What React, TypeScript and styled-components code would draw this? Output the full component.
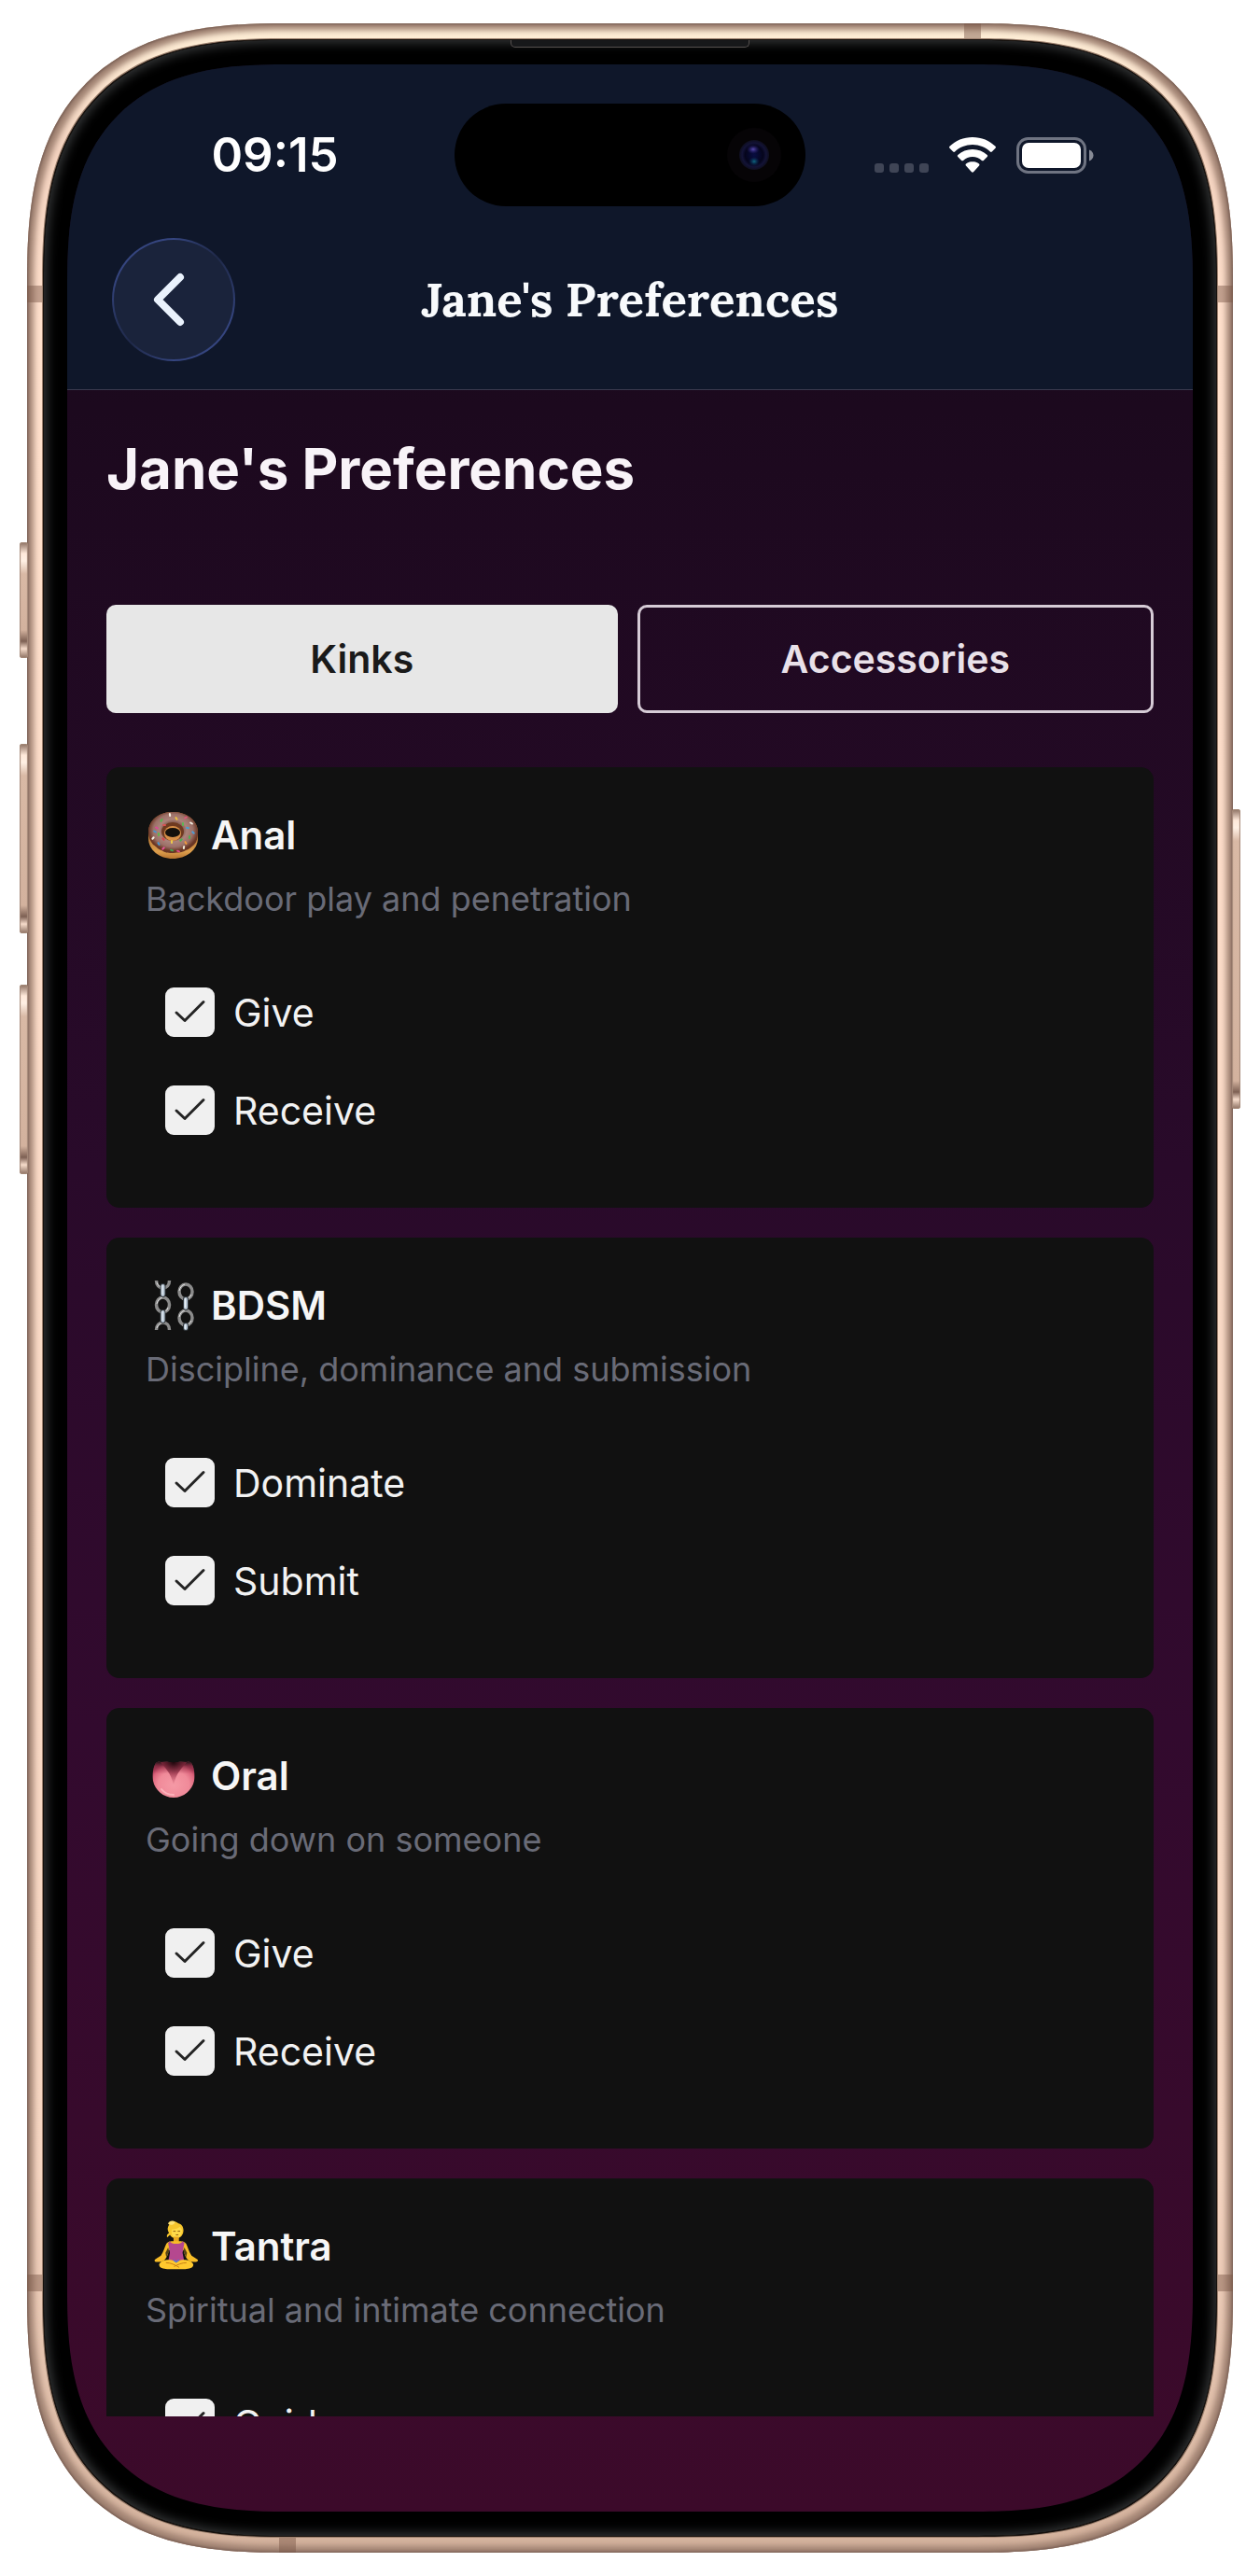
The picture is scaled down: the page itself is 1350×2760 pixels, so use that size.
import React, { useState } from "react";
import styled, { createGlobalStyle, css } from "styled-components";

const GlobalStyle = createGlobalStyle`
  *, *::before, *::after { box-sizing: border-box; }
  body { margin: 0; background: #fff; font-family: Inter, "Liberation Sans", sans-serif; }
  h1, h2, h3, p { margin: 0; }
  button { font: inherit; cursor: pointer; }
`;

const Page = styled.div`
  height: 100vh;
  padding: 25px 29px;
`;

/* Corners use a continuous curve where the browser knows it. */
const smoothCorner = (round: number, smooth: number) => css`
  border-radius: ${round}px;
  @supports (corner-shape: squircle) {
    border-radius: ${smooth}px;
    corner-shape: superellipse(1.4);
  }
`;

const Device = styled.div`
  position: relative;
  height: 100%;
  padding: 17px;
  background: linear-gradient(#fff0d8, #f4d3c0 5%, #ffe0cc 12%, #f6d6c2 85%, #d3b19c);
  box-shadow: inset 0 0 3px 1px #735a50, inset 0 0 6px 7px #a08272;
  ${smoothCorner(220, 276)}
`;

const Bezel = styled.div`
  position: relative;
  height: 100%;
  padding: 26px 25px;
  background: #000;
  border: 1px solid #17110d;
  box-shadow: 0 0 0 1px #9b7f6d, inset 0 0 12px 3px #343637;
  ${smoothCorner(204, 258)}
`;

const Screen = styled.div`
  position: relative;
  display: flex;
  flex-direction: column;
  height: 100%;
  overflow: hidden;
  background: linear-gradient(#150919, #1c091e 14%, #290a2a 45%, #320a2e 68%, #3c0a2a);
  ${smoothCorner(186, 236)}
`;

const SideButton = styled.span<{ $side: "left" | "right"; $top: number; $length: number }>`
  position: absolute;
  ${(p) => p.$side}: -8px;
  top: ${(p) => p.$top}px;
  width: 9px;
  height: ${(p) => p.$length}px;
  border-radius: 3px;
  background: linear-gradient(
    #8a6e60 0, #ffe9da 12px, #fff0e4 20px, #d9b9a5 34px,
    #d3b29e calc(100% - 30px), #7d6053 calc(100% - 18px), #f6dccb calc(100% - 10px), #8a6e60 100%
  );
  box-shadow: inset 0 0 1px 1px #a58978;
`;

const Band = styled.span<{ $edge: "left" | "right" | "top" | "bottom"; $near: "left" | "right" | "top" | "bottom"; $at: number }>`
  position: absolute;
  ${(p) => p.$edge}: 0;
  ${(p) => p.$near}: ${(p) => p.$at}px;
  width: ${(p) => (p.$edge === "left" || p.$edge === "right" ? 16 : 18)}px;
  height: ${(p) => (p.$edge === "left" || p.$edge === "right" ? 18 : 16)}px;
  background: rgba(120, 84, 68, 0.45);
`;

const Speaker = styled.span`
  position: absolute;
  top: 0;
  left: calc(50% - 128px);
  width: 256px;
  height: 8px;
  border: 1px solid #55504e;
  border-top: 0;
  border-radius: 0 0 5px 5px;
  background: #17181a;
`;

const Header = styled.header`
  flex: none;
  background: #0f172a;
  border-bottom: 1px solid #3b3a4e;
`;

const StatusBar = styled.div`
  display: grid;
  grid-template-columns: 1fr 376px 1fr;
  align-items: center;
  justify-items: center;
  height: 186px;
  padding-top: 8px;
`;

const Clock = styled.time`
  padding-left: 30px;
  color: #fff;
  font-size: 51px;
  line-height: 60px;
  font-weight: 600;
`;

const Island = styled.div`
  display: flex;
  align-items: center;
  justify-content: flex-end;
  width: 100%;
  height: 110px;
  padding-right: 25px;
  border-radius: 55px;
  background: #000;
`;

const StatusIcons = styled.div`
  display: flex;
  align-items: center;
  gap: 22px;
  padding-right: 32px;
`;

const NavBar = styled.div`
  display: grid;
  grid-template-columns: 132px 1fr 132px;
  align-items: center;
  padding: 0 48px 30px;
`;

const BackButton = styled.button`
  display: grid;
  place-items: center;
  width: 132px;
  height: 132px;
  padding: 0 10px 0 0;
  border: 2px solid transparent;
  border-radius: 50%;
  background:
    linear-gradient(#1a233b, #1a233b) padding-box,
    conic-gradient(#35457f, #1f2949 45deg, #35457f 110deg, #35457f 180deg, #1f2949 225deg, #35457f 290deg, #35457f) border-box;
`;

const NavTitle = styled.h2`
  color: #f8fafc;
  font-family: Lora, "Liberation Serif", serif;
  font-size: 51px;
  line-height: 66px;
  font-weight: 700;
  text-align: center;
  white-space: nowrap;
`;

const Content = styled.main`
  flex: 1;
  min-height: 0;
  margin-bottom: 102px;
  padding: 48px 42px 0;
  overflow-y: auto;
  scrollbar-width: none;
`;

const Heading = styled.h1`
  margin-bottom: 110px;
  color: #f8f3f8;
  font-size: 60px;
  line-height: 72px;
  font-weight: 700;
`;

const Tabs = styled.div`
  display: flex;
  gap: 21px;
  margin-bottom: 58px;
`;

const Tab = styled.button<{ $active: boolean }>`
  flex: 1;
  height: 116px;
  padding: 0;
  border: ${(p) => (p.$active ? "0" : "3px solid #d6cbd6")};
  border-radius: 10px;
  background: ${(p) => (p.$active ? "#e7e7e7" : "transparent")};
  color: ${(p) => (p.$active ? "#1a1a1a" : "#e9e1e9")};
  font-size: 41px;
  line-height: 60px;
  font-weight: 600;
`;

const CardList = styled.div`
  display: flex;
  flex-direction: column;
  gap: 32px;
`;

const Card = styled.section`
  padding: 43px 42px 52px;
  border-radius: 14px;
  background: #111;
`;

const CardTitle = styled.h3`
  display: flex;
  align-items: center;
  gap: 14px;
  color: #f6f6f6;
  font-size: 42px;
  line-height: 60px;
  font-weight: 600;
`;

const CardText = styled.p`
  margin-top: 14px;
  color: #696b77;
  font-size: 36px;
  line-height: 48px;
`;

const Options = styled.div`
  margin-top: 45px;
  padding-left: 21px;
`;

const Option = styled.label`
  display: flex;
  align-items: center;
  gap: 20px;
  height: 105px;
  color: #f2f2f2;
  font-size: 41px;
  line-height: 60px;
  cursor: pointer;
`;

const TickBox = styled.span`
  display: grid;
  width: 53px;
  height: 53px;
  > * { grid-area: 1 / 1; }
  svg { pointer-events: none; }
`;

const TickInput = styled.input`
  appearance: none;
  width: 53px;
  height: 53px;
  margin: 0;
  border: 2px solid #f0f0f0;
  border-radius: 9px;
  background: transparent;
  &:checked { background: #f0f0f0; }
`;

function Camera() {
  return (
    <svg width="60" height="60" viewBox="0 0 60 60" aria-hidden="true">
      <defs>
        <radialGradient id="lens">
          <stop offset="0" stopColor="#080d42" />
          <stop offset="0.6" stopColor="#05051c" />
          <stop offset="0.8" stopColor="#131336" />
          <stop offset="1" stopColor="#0e0e1e" />
        </radialGradient>
        <radialGradient id="glint">
          <stop offset="0" stopColor="#5a4cb0" />
          <stop offset="1" stopColor="#241c70" stopOpacity="0" />
        </radialGradient>
        <radialGradient id="glow">
          <stop offset="0" stopColor="#0f6a80" />
          <stop offset="1" stopColor="#0a2a60" stopOpacity="0" />
        </radialGradient>
      </defs>
      <circle cx="30" cy="30" r="29" fill="#060406" />
      <circle cx="30" cy="30" r="16" fill="url(#lens)" />
      <ellipse cx="29" cy="24" rx="7" ry="5" fill="url(#glint)" />
      <ellipse cx="30" cy="37" rx="6" ry="5" fill="url(#glow)" />
    </svg>
  );
}

function SignalDots() {
  return (
    <svg width="58" height="38" viewBox="0 0 58 38" fill="#3f4556" aria-hidden="true">
      {[0, 16, 32, 48].map((x) => (
        <rect key={x} x={x} y="28" width="10" height="10" rx="3" />
      ))}
    </svg>
  );
}

function Wifi() {
  return (
    <svg width="50" height="38" viewBox="0 0 50 38" fill="#fff" aria-hidden="true">
      <path d="M25 0C15.400 0 6.700 3.700.5 9.800c-.6.6-.6 1.400 0 2l3.700 3.700c.6.500 1.300.5 1.900 0C11 10.800 17.700 8 25 8s14 2.800 18.900 7.500c.6.5 1.300.5 1.900 0l3.700-3.700c.6-.6.6-1.400 0-2C43.300 3.700 34.600 0 25 0Z" />
      <path d="M25 13c-6 0-11.500 2.300-15.700 6-.6.6-.6 1.400 0 2l3.900 3.900c.5.500 1.300.5 1.900 0C17.800 22.500 21.200 21 25 21s7.200 1.500 9.900 3.900c.6.5 1.400.5 1.900 0l3.900-3.900c.6-.6.6-1.400 0-2C36.500 15.300 31 13 25 13Z" />
      <path d="M25 26c-2.700 0-5.100.9-7 2.500-.6.5-.6 1.300-.1 1.900l6.100 6.900c.6.600 1.400.6 2 0l6.100-6.900c.5-.6.5-1.400-.1-1.900-1.900-1.600-4.300-2.500-7-2.500Z" />
    </svg>
  );
}

function Battery() {
  return (
    <svg width="83" height="39" viewBox="0 0 83 39" aria-hidden="true">
      <rect x="1.500" y="1.500" width="72" height="36" rx="11" fill="none" stroke="#6f7482" strokeWidth="3" />
      <rect x="6" y="6" width="63" height="27" rx="7" fill="#fff" />
      <path d="M78 13.500c3 1 4.500 3.500 4.500 6s-1.500 5-4.500 6Z" fill="#868a95" />
    </svg>
  );
}

function Chevron() {
  return (
    <svg width="34" height="58" viewBox="0 0 34 58" fill="none" stroke="#eaf2fd" strokeWidth="8" strokeLinecap="round" strokeLinejoin="round" aria-hidden="true">
      <path d="M29 5 5 29 29 53" />
    </svg>
  );
}

function Tick() {
  return (
    <svg width="53" height="53" viewBox="0 0 53 53" fill="none" stroke="#242424" strokeWidth="3" strokeLinecap="round" strokeLinejoin="round" aria-hidden="true">
      <path d="m12 27 9 8.500 20-20" />
    </svg>
  );
}

function Donut() {
  const sprinkles: [number, number, number, string][] = [
    [12, 20, 30, "#e0459a"], [17, 12, 120, "#55b84e"], [26, 6, 80, "#f8f4e4"], [33, 10, 60, "#edc23f"],
    [43, 9, 150, "#e0557a"], [49, 15, 30, "#f2eee2"], [51, 25, 40, "#4d9fd8"], [47, 30, 90, "#4cb04f"],
    [43, 36, 60, "#ee9a3e"], [41, 41, 100, "#f2ecd9"], [28, 35, 90, "#edc94a"], [28, 44, 20, "#45a352"],
    [19, 42, 140, "#e6549c"], [14, 37, 60, "#4797cf"], [8, 31, 130, "#f4f0e3"], [14, 27, 90, "#5cba4a"],
    [19, 32, 50, "#d7434c"], [40, 16, 90, "#5ab852"], [45, 20, 10, "#49a0d0"], [35, 45, 20, "#e04a8a"], [20, 17, 0, "#d75353"],
    [38, 33, 140, "#4cb04f"], [10, 24, 30, "#4797cf"],
  ];
  return (
    <svg width="56" height="56" viewBox="0 0 56 56" aria-hidden="true">
      <defs>
        <radialGradient id="icing" cx="0.5" cy="0.45">
          <stop offset="0.2" stopColor="#5e3020" />
          <stop offset="0.55" stopColor="#ab837b" />
          <stop offset="0.8" stopColor="#9c7168" />
          <stop offset="1" stopColor="#6a3624" />
        </radialGradient>
        <linearGradient id="dough" x2="0" y2="1">
          <stop offset="0.4" stopColor="#a8692c" />
          <stop offset="0.85" stopColor="#dc9e4c" />
          <stop offset="1" stopColor="#b87430" />
        </linearGradient>
      </defs>
      <path d="M3 25C3 11 15 3 29 3s27 8 27 22v6c0 13-13 22-27 22S3 44 3 31Z" fill="url(#dough)" />
      <path d="M3 25C3 11 15 3 29 3s27 8 27 22c0 5-1 10-4 13-3 2-5 5-9 6-4 3-8 2-13 3-5 0-9 0-13-3-4-1-5-4-9-6-3-4-5-8-5-13Z" fill="url(#icing)" />
      <ellipse cx="29" cy="24" rx="12" ry="10" fill="#6f3a20" />
      <ellipse cx="29" cy="26" rx="9" ry="8" fill="#d99048" />
      <ellipse cx="29" cy="25" rx="8" ry="5" fill="#15100c" />
      {sprinkles.map(([x, y, angle, color]) => (
        <rect key={`${x}-${y}`} x={x - 2} y={y - 1} width="4" height="2" rx="1" fill={color} transform={`rotate(${angle} ${x} ${y})`} />
      ))}
    </svg>
  );
}

function Chains() {
  return (
    <svg width="56" height="56" viewBox="0 0 56 56" fill="none" aria-hidden="true">
      <g stroke="#8b8b8b" strokeWidth="3.500">
        <path d="M11.500 1c0 5 3 8 7 8s7-3 7-8M11.500 54c0-5 3-8 7-8s7 3 7 8" />
        <ellipse cx="18.500" cy="27" rx="7" ry="8" />
        <ellipse cx="43" cy="13" rx="7" ry="8" />
        <ellipse cx="43" cy="41" rx="7" ry="8" />
      </g>
      <g stroke="#e4e4e4" strokeWidth="1">
        <path d="M12 26c1-4 3-6 6-7M24 30c-1 3-3 5-5 5M36 12c1-4 3-6 6-7M49 16c-1 2-3 4-5 5M36 40c1-4 3-6 6-7M49 44c-1 2-3 4-5 5M12 3c1 3 3 5 6 6M12 52c1-3 3-5 6-6" />
      </g>
      <g stroke="#33383d" strokeWidth="6" strokeLinecap="round">
        <path d="M18.500 7v9M18.500 35v9M43 21v9M43 49v3" />
      </g>
      <g stroke="#b9c8d6" strokeWidth="4" strokeLinecap="round">
        <path d="M18.500 7v9M18.500 35v9M43 21v9M43 49v3" />
      </g>
      <g stroke="#eef4fa" strokeWidth="1">
        <path d="M18 6v10M18 34v10M42.500 20v10M42.500 48v5" />
      </g>
    </svg>
  );
}

function Tongue() {
  const outline = "M11 14c5-4 13-1 19 0 6-1 14-4 19 0 3 4 4 12 3 19-2 10-11 18-22 18S10 43 8 33c-1-7 0-15 3-19Z";
  return (
    <svg width="56" height="56" viewBox="0 0 56 56" aria-hidden="true">
      <defs>
        <radialGradient id="tongue" cx="0.5" cy="0.65" r="0.62">
          <stop offset="0" stopColor="#f59aa6" />
          <stop offset="0.6" stopColor="#f08a99" />
          <stop offset="0.85" stopColor="#dc647c" />
          <stop offset="1" stopColor="#b03f5c" />
        </radialGradient>
        <linearGradient id="tongue-shade" x2="0" y2="1">
          <stop offset="0" stopColor="#111" />
          <stop offset="0.15" stopColor="#5a1626" stopOpacity="0.4" />
          <stop offset="0.35" stopColor="#7a1730" stopOpacity="0" />
        </linearGradient>
        <radialGradient id="crease" cx="0.5" cy="0" r="1">
          <stop offset="0" stopColor="#1c060b" />
          <stop offset="0.5" stopColor="#8e2a42" stopOpacity="0.7" />
          <stop offset="1" stopColor="#b8405a" stopOpacity="0" />
        </radialGradient>
      </defs>
      <path d={outline} fill="url(#tongue)" />
      <path d={outline} fill="url(#tongue-shade)" />
      <path d="M16 13h28c-4 6-11 10-14 25-3-15-10-19-14-25Z" fill="url(#crease)" />
      <path d="M17 42c3 4 8 6 13 6" fill="none" stroke="#ffc3c9" strokeWidth="2" opacity="0.7" strokeLinecap="round" />
    </svg>
  );
}

function Lotus() {
  return (
    <svg width="56" height="56" viewBox="-2 0 56 58" aria-hidden="true">
      <path d="M23 5c1-4 7-5 10-2 4 1 6 4 6 8 0 5-3 9-8 9-3 0-6-2-7-4l-3 3c-1-2 0-4 2-5-2-3-2-6 0-9Z" fill="#f6c52c" />
      <path d="M26 10c3 0 7-1 9-3 2 2 3 4 2 7s-3 6-6 6-6-4-5-10Z" fill="#ffdb4a" />
      <path d="M22 4c0-3 5-5 8-2-2 3-5 4-8 2Z" fill="#ffe273" />
      <path d="M28 12h2M33 12h2M31 16h2" stroke="#8d5a12" strokeWidth="1" strokeLinecap="round" />
      <path d="M28 18h6v7h-6Z" fill="#e9a820" />
      <path d="M20 26c2-3 5-3 8-3h6c3 0 6 0 8 3 2 4 3 9 6 13l6 4c2 1 1 3-1 3-4 0-7 0-9-2-3-3-4-7-5-11H23c-1 4-2 8-5 11-2 2-5 2-9 2-2 0-3-2-1-3l6-4c3-4 4-9 6-13Z" fill="#f8bd27" />
      <path d="M19 36 22 30 23 34 20 41ZM43 36 40 30 39 34 42 41Z" fill="#111" opacity="0.7" />
      <path d="M24 23c1 4 13 4 14 0l2 2-2 11 2 10H22l2-10-2-11Z" fill="#b5488f" />
      <path d="M12 49c1-4 8-6 14-5l5 2 5-2c6-1 13 1 14 5 0 4-5 5-9 5H21c-4 0-9-1-9-5Z" fill="#ffc92e" />
      <path d="M20 47c5 0 9 2 14 5M42 47c-5 0-9 2-13 4" fill="none" stroke="#c67d14" strokeWidth="1" strokeLinecap="round" />
      <path d="m28 43 3 2 3-2v2l-3 2-3-2Z" fill="#5b78c8" />
    </svg>
  );
}

const cards = [
  { title: "Anal", text: "Backdoor play and penetration", icon: <Donut />, options: ["Give", "Receive"] },
  { title: "BDSM", text: "Discipline, dominance and submission", icon: <Chains />, options: ["Dominate", "Submit"] },
  { title: "Oral", text: "Going down on someone", icon: <Tongue />, options: ["Give", "Receive"] },
  { title: "Tantra", text: "Spiritual and intimate connection", icon: <Lotus />, options: ["Guide"] },
];

function CheckOption({ name }: { name: string }) {
  const [checked, setChecked] = useState(true);
  return (
    <Option>
      <TickBox>
        <TickInput type="checkbox" checked={checked} onChange={(e) => setChecked(e.target.checked)} />
        {checked && <Tick />}
      </TickBox>
      {name}
    </Option>
  );
}

export default function App() {
  const [tab, setTab] = useState("Kinks");
  return (
    <>
      <GlobalStyle />
      <Page>
        <Device>
          <SideButton $side="left" $top={556} $length={124} />
          <SideButton $side="left" $top={772} $length={203} />
          <SideButton $side="left" $top={1030} $length={203} />
          <SideButton $side="right" $top={842} $length={321} />
          <Band $edge="left" $near="top" $at={281} />
          <Band $edge="right" $near="top" $at={281} />
          <Band $edge="left" $near="bottom" $at={280} />
          <Band $edge="right" $near="bottom" $at={280} />
          <Band $edge="top" $near="right" $at={270} />
          <Band $edge="bottom" $near="left" $at={270} />
          <Bezel>
            <Speaker />
            <Screen>
              <Header>
                <StatusBar>
                  <Clock>09:15</Clock>
                  <Island>
                    <Camera />
                  </Island>
                  <StatusIcons>
                    <SignalDots />
                    <Wifi />
                    <Battery />
                  </StatusIcons>
                </StatusBar>
                <NavBar>
                  <BackButton type="button" aria-label="Back">
                    <Chevron />
                  </BackButton>
                  <NavTitle>Jane's Preferences</NavTitle>
                </NavBar>
              </Header>
              <Content>
                <Heading>Jane's Preferences</Heading>
                <Tabs>
                  {["Kinks", "Accessories"].map((name) => (
                    <Tab key={name} type="button" $active={tab === name} aria-pressed={tab === name} onClick={() => setTab(name)}>
                      {name}
                    </Tab>
                  ))}
                </Tabs>
                <CardList>
                  {cards.map((card) => (
                    <Card key={card.title}>
                      <CardTitle>
                        {card.icon}
                        {card.title}
                      </CardTitle>
                      <CardText>{card.text}</CardText>
                      <Options>
                        {card.options.map((name) => (
                          <CheckOption key={name} name={name} />
                        ))}
                      </Options>
                    </Card>
                  ))}
                </CardList>
              </Content>
            </Screen>
          </Bezel>
        </Device>
      </Page>
    </>
  );
}
